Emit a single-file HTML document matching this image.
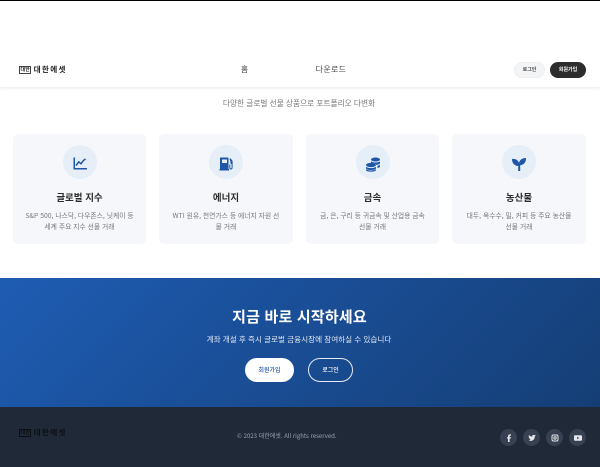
<!DOCTYPE html>
<html lang="ko"><head><meta charset="utf-8"><title>대한에셋</title>
<style>
*{box-sizing:border-box;margin:0;padding:0}
html,body{width:600px;height:467px;overflow:hidden;background:#fff}
body{position:relative;font-family:"Noto Sans CJK KR","Liberation Sans",sans-serif;color:#333}
.a{position:absolute;white-space:nowrap}
.c{text-align:center;transform:translateX(-50%)}
.t{filter:blur(.3px)}
.card{position:absolute;top:134px;height:110px;background:#f5f7fb;border-radius:5px}
.circ{position:absolute;top:11px;left:50%;margin-left:-17px;width:34px;height:34px;border-radius:50%;background:#e6eef8}
.circ svg{position:absolute;left:9px;top:10.500px;width:16px;height:16px;fill:#1e56a8}
.h{position:absolute;top:56px;left:0;right:0;text-align:center;font-size:9.500px;line-height:14px;font-weight:700;color:#2b2b2b;white-space:nowrap}
.d{position:absolute;top:76px;left:0;right:0;text-align:center;font-size:6.800px;line-height:11px;color:#777;white-space:nowrap}
.soc{position:absolute;top:429px;width:17px;height:17px;border-radius:50%;background:#374151}
.soc svg{position:absolute;left:4.500px;top:4.500px;width:8px;height:8px;fill:#e5e7eb}
</style></head><body>
<div class="a" style="left:0;top:0;width:600px;height:1px;background:#000"></div>
<div class="a" style="left:0;top:1px;width:600px;height:86px;background:#fff;box-shadow:0 1px 3px rgba(0,0,0,.1)"></div>

<div class="a t" style="left:20px;top:64px;font-size:7.600px;line-height:11px;font-weight:700;color:#222;letter-spacing:1.300px"><span style="font-size:5px;outline:.7px solid #444;line-height:6px;display:inline-block;padding:0 .5px;letter-spacing:0;vertical-align:1px">대한</span> 대한에셋</div>
<div class="a c t" style="left:244.500px;top:64px;font-size:8px;line-height:12px;color:#444">홈</div>
<div class="a c t" style="left:331px;top:64px;font-size:8px;line-height:12px;color:#444;letter-spacing:.3px">다운로드</div>
<div class="a" style="left:514px;top:62px;width:31px;height:16px;border-radius:8px;background:#f3f4f6;border:1px solid #eee"></div>
<div class="a c t" style="left:529.500px;top:66px;font-size:5px;line-height:8px;font-weight:700;color:#444">로그인</div>
<div class="a" style="left:550px;top:62px;width:36px;height:16px;border-radius:8px;background:#2d2d2d"></div>
<div class="a c t" style="left:568px;top:66px;font-size:5px;line-height:8px;font-weight:700;color:#fff">회원가입</div>

<div class="a c t" style="left:299px;top:98px;font-size:7.700px;line-height:12px;color:#777">다양한 글로벌 선물 상품으로 포트폴리오 다변화</div>

<div class="card t" style="left:13px;width:133px">
 <div class="circ"><svg viewBox="0 0 16 16"><path d="M1.500 1.500h1.500v10.500h12v1.500H1.500z"/><path d="M4 9.500 6.800 5.800 9 7.800l2.600-3.500 2-1.300" fill="none" stroke="#1e56a8" stroke-width="1.500"/></svg></div>
 <div class="h">글로벌 지수</div>
 <div class="d">S&amp;P 500, 나스닥, 다우존스, 닛케이 등<br>세계 주요 지수 선물 거래</div>
</div>
<div class="card t" style="left:159px;width:134px">
 <div class="circ"><svg viewBox="0 0 16 16"><path d="M2.500 1.500h7a1 1 0 0 1 1 1V13h.5v1.500H1.500V13H2V2a.5.5 0 0 1 .5-.5zM4 3.500V7h5V3.500z" fill-rule="evenodd"/><path d="M11.500 3l1.100-.8 2 2.800v6.500c0 1.300-.7 2-1.700 2s-1.600-.7-1.600-1.800V8.500h1v3c0 .6.200.9.600.9s.700-.3.700-1V8.200c-.8-.2-1.200-.8-1.200-1.700V5.200z"/></svg></div>
 <div class="h">에너지</div>
 <div class="d">WTI 원유, 천연가스 등 에너지 자원 선<br>물 거래</div>
</div>
<div class="card t" style="left:306px;width:133px">
 <div class="circ"><svg viewBox="0 0 16 16"><ellipse cx="10.500" cy="3.500" rx="4.500" ry="2"/><path d="M6 5.200c1 1 3 1.300 4.500 1.300s3.500-.4 4.500-1.300V7c0 .9-1.500 1.700-3.600 1.900C11 7.700 9 7.200 6 7.300zM12.500 9.800c1-.2 2-.6 2.500-1.100v1.800c0 .6-1 1.300-2.500 1.600z"/><ellipse cx="6" cy="9" rx="5" ry="2.100"/><path d="M1 10.800c1 .9 3 1.300 5 1.300s4-.4 5-1.300v1.400c0 1-2.200 1.800-5 1.800s-5-.8-5-1.800z"/><path d="M1 13.300c1 .8 3 1.200 5 1.200s4-.4 5-1.200v.7c0 1-2.200 1.700-5 1.700s-5-.7-5-1.700z"/></svg></div>
 <div class="h">금속</div>
 <div class="d">금, 은, 구리 등 귀금속 및 산업용 금속<br>선물 거래</div>
</div>
<div class="card t" style="left:452px;width:134px">
 <div class="circ"><svg viewBox="0 0 16 16"><path d="M1 3c3.500-.4 6 1 7 4 .6-3 3-5 7-5 .2 4-2 6.800-5.800 7.200V15H7.200v-5C3.500 9.800 1 7.200 1 3z"/></svg></div>
 <div class="h">농산물</div>
 <div class="d">대두, 옥수수, 밀, 커피 등 주요 농산물<br>선물 거래</div>
</div>

<div class="a" style="left:0;top:278px;width:600px;height:129px;background:linear-gradient(135deg,#1e5cb3 0%,#153e75 100%)"></div>
<div class="a c t" style="left:299.500px;top:307px;font-size:15px;line-height:20px;font-weight:700;color:#fff;letter-spacing:.2px">지금 바로 시작하세요</div>
<div class="a c t" style="left:299px;top:334px;font-size:7.600px;line-height:12px;color:#e3e9f3">계좌 개설 후 즉시 글로벌 금융시장에 참여하실 수 있습니다</div>
<div class="a" style="left:245px;top:358px;width:49px;height:24px;border-radius:12px;background:#fff"></div>
<div class="a c t" style="left:269.500px;top:365px;font-size:6px;line-height:10px;font-weight:500;color:#1e56a8">회원가입</div>
<div class="a" style="left:308px;top:358px;width:45px;height:24px;border-radius:12px;border:1px solid #e6ebf3"></div>
<div class="a c t" style="left:330.500px;top:365px;font-size:6px;line-height:10px;font-weight:500;color:#fff">로그인</div>

<div class="a" style="left:0;top:407px;width:600px;height:60px;background:#1f2937"></div>
<div class="a t" style="left:20px;top:427px;font-size:7.600px;line-height:11px;font-weight:700;color:#0c1016;letter-spacing:1.300px"><span style="font-size:5px;outline:.7px solid #0c1016;line-height:6px;display:inline-block;padding:0 .5px;letter-spacing:0;vertical-align:1px">대한</span> 대한에셋</div>
<div class="a t" style="left:237px;top:431px;font-size:6px;line-height:10px;color:#9ca3af">© 2023 대한에셋. All rights reserved.</div>

<div class="soc" style="left:500px"><svg viewBox="0 0 8 8"><path d="M3 8V4.500H2V3.200h1V2.300C3 1 3.700.4 4.800.4H6v1.300h-.7c-.5 0-.7.200-.7.700v.8H6l-.2 1.300H4.600V8z"/></svg></div>
<div class="soc" style="left:523px"><svg viewBox="0 0 8 8"><path d="M8 1.600c-.3.100-.6.200-.9.200.3-.2.600-.5.700-.9-.3.200-.6.300-1 .4C6.200.9 5.500.7 4.900 1c-.6.300-.9 1-.7 1.700C2.900 2.600 1.700 2 .9 1c-.4.700-.2 1.600.5 2.100-.3 0-.5-.1-.7-.2 0 .8.500 1.400 1.300 1.600-.2.100-.5.100-.7 0 .2.600.8 1.100 1.500 1.100-.7.500-1.500.8-2.300.7 2.400 1.500 6.300.2 6.300-4.100.4-.2.700-.4 1.200-.6z"/></svg></div>
<div class="soc" style="left:546px"><svg viewBox="0 0 8 8"><path fill-rule="evenodd" d="M2.500.5h3a2 2 0 0 1 2 2v3a2 2 0 0 1-2 2h-3a2 2 0 0 1-2-2v-3a2 2 0 0 1 2-2zm0 1a1 1 0 0 0-1 1v3a1 1 0 0 0 1 1h3a1 1 0 0 0 1-1v-3a1 1 0 0 0-1-1zM4 2.300a1.700 1.700 0 1 1 0 3.400 1.700 1.700 0 0 1 0-3.400zm0 1a.7.7 0 1 0 0 1.400.7.7 0 0 0 0-1.400z"/></svg></div>
<div class="soc" style="left:569px"><svg viewBox="0 0 8 8"><path fill-rule="evenodd" d="M1 1.300h6a1 1 0 0 1 1 1v3.400a1 1 0 0 1-1 1H1a1 1 0 0 1-1-1V2.300a1 1 0 0 1 1-1zM3.200 2.800v2.400L5.300 4z"/></svg></div>
</body></html>
